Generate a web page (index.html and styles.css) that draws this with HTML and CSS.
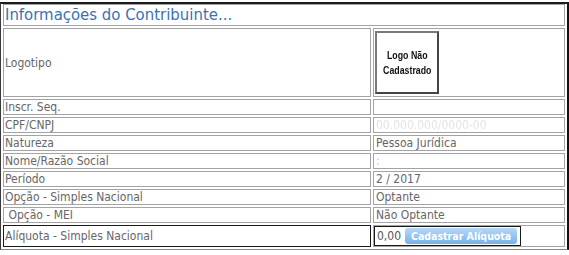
FILE: index.html
```html
<!DOCTYPE html>
<html lang="pt-BR">
<head>
  <meta charset="UTF-8">
  <meta name="viewport" content="width=device-width, initial-scale=1.0">
  <title>Informações do Contribuinte</title>
  <link rel="stylesheet" href="styles.css">
</head>
<body>

  <div class="frame">
    <table class="info">
      <!-- Titulo -->
      <tr>
        <td colspan="2" class="title">Informações do Contribuinte...</td>
      </tr>

      <!-- Logotipo -->
      <tr class="logo-row">
        <td class="label">Logotipo</td>
        <td class="value">
          <div class="logo-box"><span>Logo Não<br>Cadastrado</span></div>
        </td>
      </tr>

      <tr>
        <td class="label">Inscr. Seq.</td>
        <td class="value"></td>
      </tr>
      <tr>
        <td class="label">CPF/CNPJ</td>
        <td class="value"><span class="masked">00.000.000/0000-00</span></td>
      </tr>
      <tr>
        <td class="label">Natureza</td>
        <td class="value">Pessoa Jurídica</td>
      </tr>
      <tr>
        <td class="label">Nome/Razão Social</td>
        <td class="value"><span class="dim">:</span></td>
      </tr>
      <tr>
        <td class="label">Período</td>
        <td class="value">2 / 2017</td>
      </tr>
      <tr>
        <td class="label">Opção - Simples Nacional</td>
        <td class="value">Optante</td>
      </tr>
      <tr>
        <td class="label">&nbsp;Opção - MEI</td>
        <td class="value">Não Optante</td>
      </tr>

      <!-- Aliquota -->
      <tr class="rate-row">
        <td class="label">Alíquota - Simples Nacional</td>
        <td class="value">
          <div class="rate-box">
            <span>0,00</span>
            <button class="btn">Cadastrar Alíquota</button>
          </div>
        </td>
      </tr>
    </table>
  </div>

</body>
</html>
```

FILE: styles.css
```css
/* Base */
body {
  margin: 0;
  background-color: #ffffff;
  font-family: "DejaVu Sans Condensed", "DejaVu Sans", sans-serif;
  font-stretch: condensed;
  color: #666666;
}

.frame {
  margin-top: 2px;
  width: 566px;
  border-top: 2px solid #1c1c1c;
  border-left: 1px solid #3a3a3a;
  border-right: 2px solid #111111;
  border-bottom: 1px solid #888888;
}

/* Tabela */
.info {
  width: 100%;
  margin-top: -2px;
  border-collapse: separate;
  border-spacing: 2px;
}

.info td {
  border: 1px solid #a3a3a3;
  font-size: 12px;
  line-height: 14px;
  vertical-align: middle;
  white-space: nowrap;
}

.title {
  padding: 0 1px;
  font-size: 16.6px !important;
  line-height: 20px !important;
  color: #3c71b0;
}

.label {
  box-sizing: border-box;
  width: 368px;
  padding: 0 1px;
}

.value {
  padding: 0 2px;
}

/* Logotipo */
.logo-row .value {
  padding: 2px 1px;
}

.logo-box {
  box-sizing: border-box;
  width: 64px;
  height: 63px;
  display: flex;
  align-items: center;
  justify-content: center;
  text-align: center;
  border: 2px solid;
  border-color: #7a7a7a #454545 #454545 #7a7a7a;
  font-family: "Liberation Sans", Arial, sans-serif;
  font-weight: bold;
  font-size: 11px;
  line-height: 15px;
  color: #111111;
}

.logo-box span {
  display: inline-block;
  transform: scaleX(0.8);
}

.masked {
  color: #e4e4e4;
  filter: blur(0.7px);
}

.dim {
  color: #bdbdbd;
}

/* Aliquota */
.rate-row .label {
  border-color: #1a1a1a;
}

.rate-row .value {
  padding: 0;
}

.rate-box {
  box-sizing: border-box;
  width: 147px;
  height: 20px;
  display: flex;
  align-items: center;
  gap: 4px;
  padding-left: 2px;
  border: 1px solid #1a1a1a;
  color: #555555;
}

.btn {
  height: 16px;
  padding: 0 6px;
  border: none;
  border-radius: 3px;
  background: linear-gradient(#b6d8f7, #78b2ea);
  font-family: "DejaVu Sans Condensed", "DejaVu Sans", sans-serif;
  font-stretch: condensed;
  font-weight: bold;
  font-size: 10.5px;
  line-height: 16px;
  color: #ffffff;
  cursor: pointer;
}
```
